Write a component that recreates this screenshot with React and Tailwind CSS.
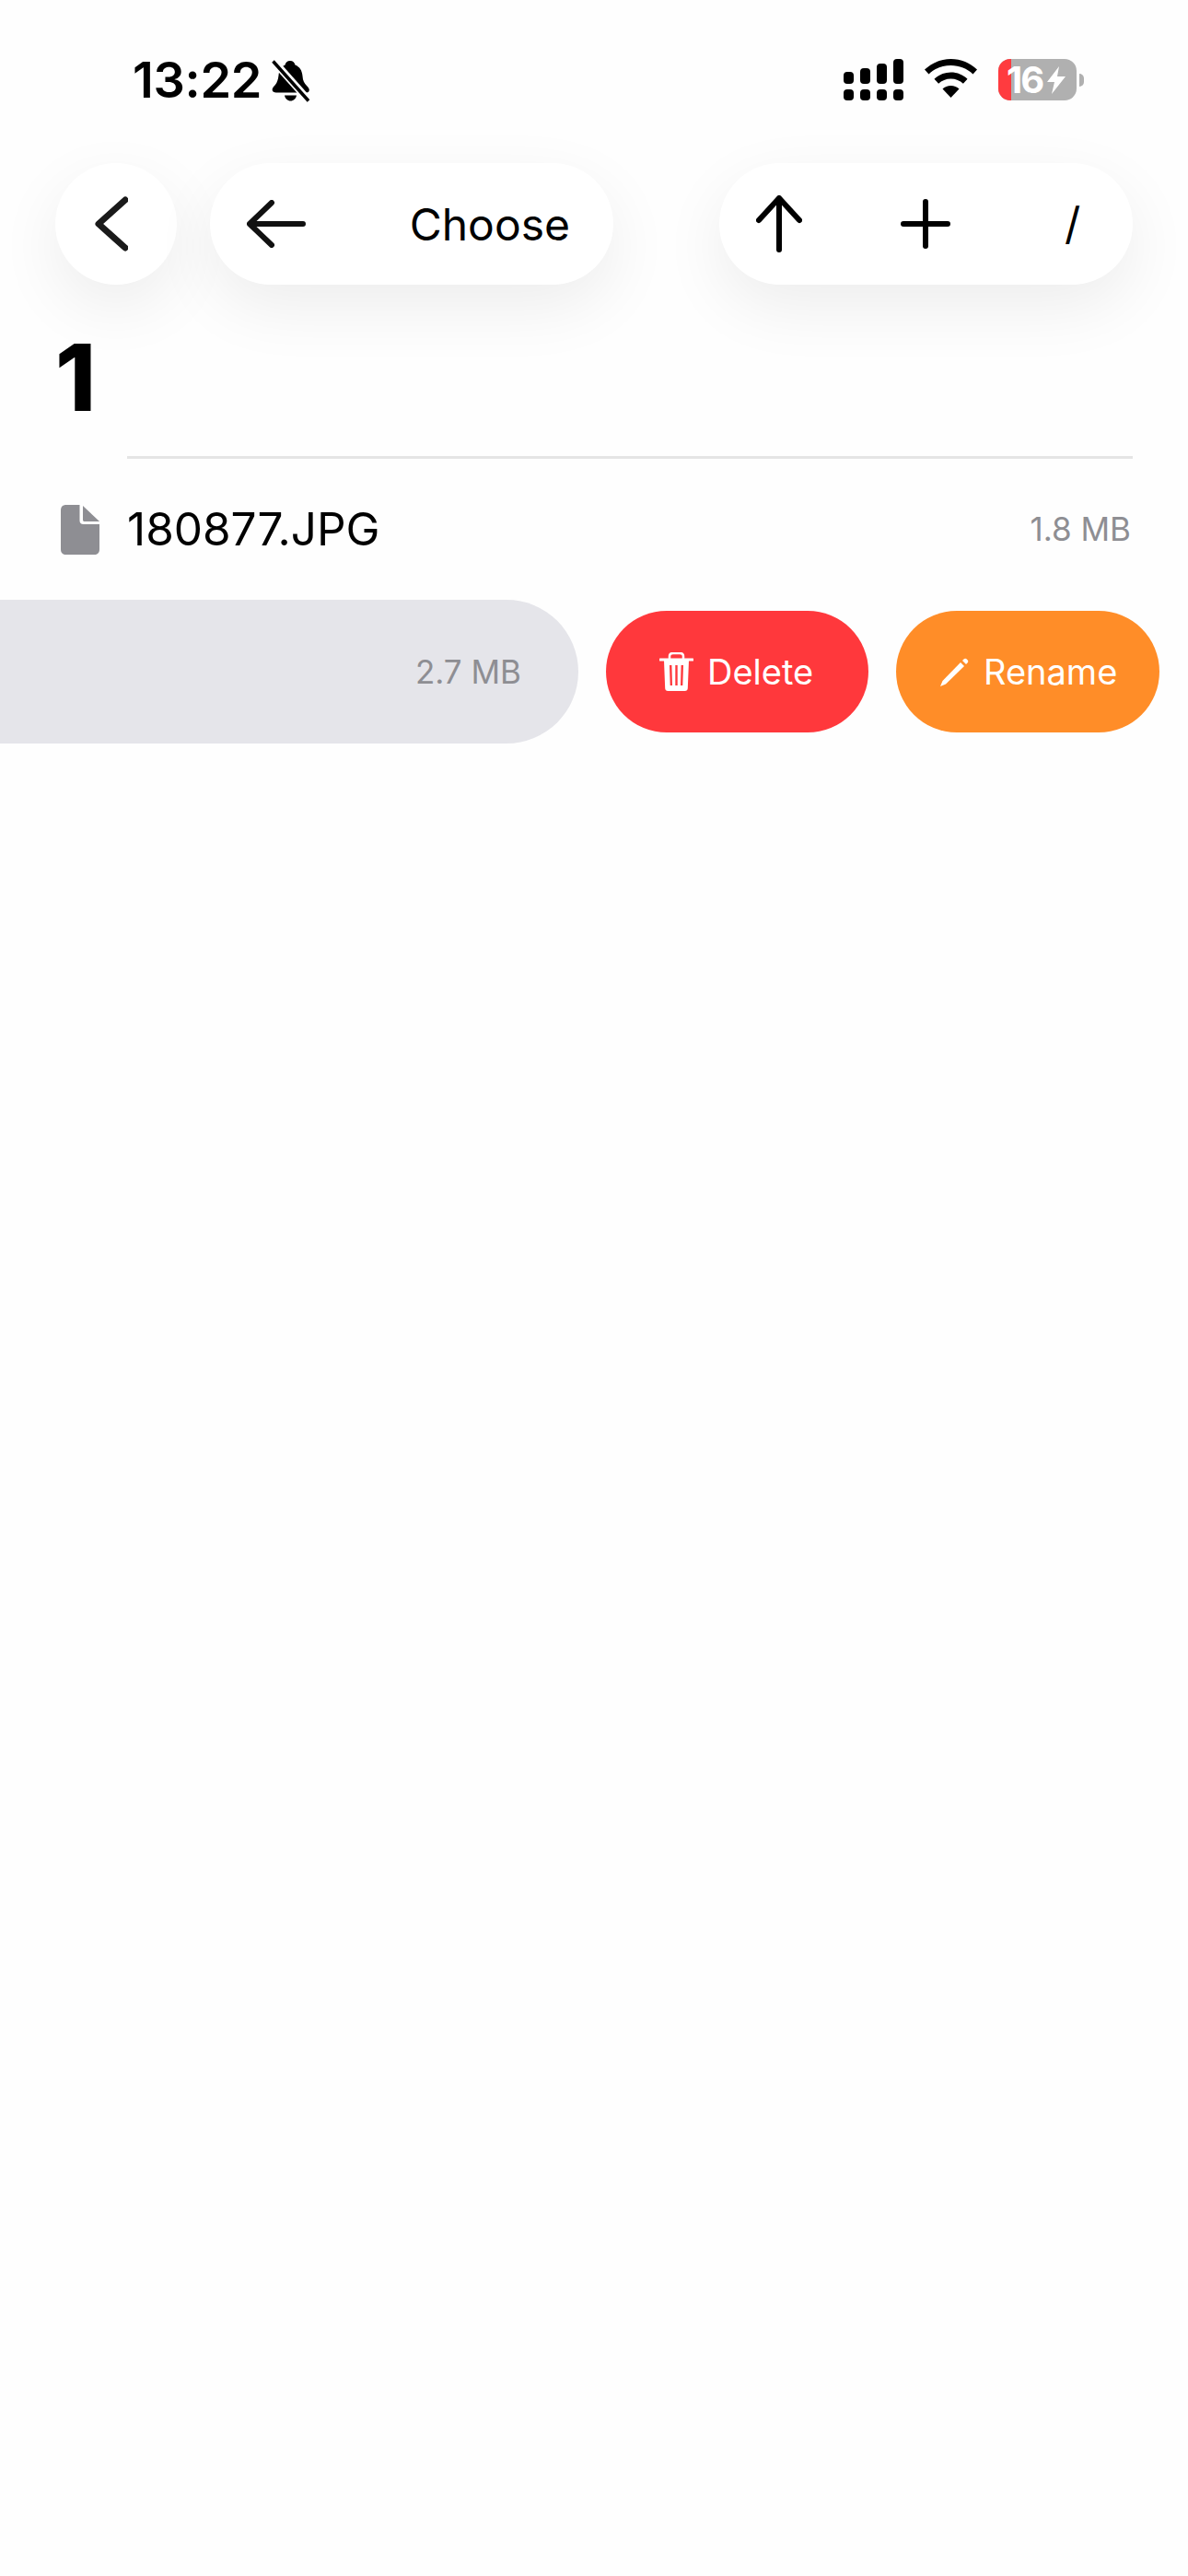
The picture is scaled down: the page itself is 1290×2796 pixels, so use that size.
import React from 'react';

const font = { fontFamily: 'Inter, sans-serif' };

function BellOff() {
  return (
    <svg width="42" height="46" viewBox="0 0 42 46">
      <path d="M20 1c3 0 5 2 5.500 4.500 5 2 7.500 6 8 12 .3 5 2 8 4.500 10.500 2 2 3.500 4 2.500 6-.5 1-2 1.500-4 1.500H5c-2.500 0-4-1-4.300-2.500C.3 31 2 29 4 27c2-2.500 3-6 3.500-10 .5-6 3.500-10 7-11.500C15 3 17 1 20 1z" fill="#000" />
      <path d="M14 38.500h13c-.6 3.600-3.300 6-6.500 6s-5.900-2.400-6.500-6z" fill="#000" />
      <path d="M1 0l41 46" stroke="#fefefe" strokeWidth="8" />
      <path d="M1.500 1.500l38.500 43" stroke="#000" strokeWidth="3.500" />
    </svg>
  );
}

function SignalBars() {
  const tops = ['h-[13px]', 'h-[17px]', 'h-[22px]', 'h-[27px]'];
  return (
    <div className="flex gap-[7px] items-end">
      {tops.map((t) => (
        <div key={t} className="flex flex-col gap-[6px] w-[11px]">
          <div className={`${t} rounded-[4px] bg-black`} />
          <div className="h-[12px] rounded-[4px] bg-black" />
        </div>
      ))}
    </div>
  );
}

function Wifi() {
  return (
    <svg width="57" height="42" viewBox="0 0 57 42">
      <path d="M28.500 0C39.500 0 49.500 4.300 57 11.500l-4.500 5C46.200 10.400 37.800 7 28.500 7S10.800 10.400 4.500 16.500L0 11.500C7.500 4.300 17.500 0 28.500 0z" fill="#000" />
      <path d="M28.500 14.500c7 0 13.300 2.700 18 7.200l-4.600 5c-3.500-3.300-8.200-5.300-13.400-5.300s-9.900 2-13.400 5.300l-4.600-5c4.700-4.500 11-7.200 18-7.200z" fill="#000" />
      <path d="M28.500 29c3.500 0 6.700 1.300 9 3.500L28.500 42l-9-9.500c2.300-2.200 5.500-3.500 9-3.500z" fill="#000" />
    </svg>
  );
}

function Battery() {
  return (
    <div className="flex items-center gap-[3px]">
      <div className="relative w-[85px] h-[45px] rounded-[13px] bg-[#b0b0b0]">
        <div className="h-full w-[14px] rounded-l-[13px] bg-[#ff3b3f]" />
        <div className="absolute inset-0 flex items-center pl-[9px] text-white font-bold text-[40px] leading-none tracking-[-2px]">
          <span>16</span>
          <svg width="20" height="30" viewBox="0 0 20 30" className="ml-[5px]">
            <path d="M13 0L0 17h8l-3 13L20 11h-9z" fill="#fff" />
          </svg>
        </div>
      </div>
      <div className="w-[5px] h-[14px] rounded-r-full bg-[#b0b0b0]" />
    </div>
  );
}

function Trash() {
  return (
    <svg width="37" height="42" viewBox="0 0 37 42">
      <path d="M11 7V4.500C11 2 12.500 1 15 1h7c2.500 0 4 1 4 3.500V7" fill="none" stroke="#fff" strokeWidth="2.500" />
      <path d="M1 8h35" stroke="#fff" strokeWidth="3" strokeLinecap="round" />
      <path fillRule="evenodd" d="M5 9h27l-1.200 30c0 2-1.300 3-3 3H9.200c-1.700 0-3-1-3-3zM11 14l.7 22h2.300l-.6-22zM17.300 14v22h2.400V14zM23.600 14l-.6 22h2.300l.7-22z" fill="#fff" />
    </svg>
  );
}

function Pencil() {
  return (
    <svg width="31" height="31" viewBox="0 0 31 31">
      <path d="M22 5l4 4L6 28.500 0 31l2.500-6z" fill="#fff" />
      <path d="M24 3l1.500-1.500c1-1 2.300-1 3.300 0l.7.7c1 1 1 2.300 0 3.300L28 7z" fill="#fff" />
    </svg>
  );
}

function FileIcon() {
  return (
    <svg width="42" height="54" viewBox="0 0 42 54">
      <path d="M6 0h14.500v17c0 2.500 1.500 4 4 4H42v27c0 4-2 6-6 6H6c-4 0-6-2-6-6V6c0-4 2-6 6-6z" fill="#8e8e93" />
      <path d="M24 1l18 17H26c-1.500 0-2-.5-2-2z" fill="#8e8e93" />
    </svg>
  );
}

const pillShadow = 'shadow-[0_24px_70px_rgba(0,0,0,0.07)]';

export default function App() {
  return (
    <div className="min-h-[2796px] bg-[#fefefe] text-black" style={font}>
      {/* status bar */}
      <div className="h-[177px] flex justify-between pt-[62px] pl-[144px] pr-[113px]">
        <div className="flex items-start gap-[11px] h-[50px]">
          <span className="text-[54px] leading-[50px] font-semibold tracking-[-0.3px]">13:22</span>
          <div className="mt-[3px]"><BellOff /></div>
        </div>
        <div className="flex items-start gap-[23px] pt-[2px]">
          <SignalBars />
          <Wifi />
          <Battery />
        </div>
      </div>

      {/* toolbar */}
      <div className="flex justify-between px-[60px]">
        <div className="flex gap-[36px]">
          <button className={`w-[132px] h-[132px] rounded-full bg-white flex items-center pl-[43px] ${pillShadow}`}>
            <svg width="36" height="60" viewBox="0 0 36 60">
              <path d="M33 4L4 30l29 26" fill="none" stroke="#1a1a1a" strokeWidth="7" strokeLinecap="round" strokeLinejoin="round" />
            </svg>
          </button>
          <button className={`w-[438px] h-[132px] rounded-full bg-white flex items-center justify-between pl-[40px] pr-[47px] ${pillShadow}`}>
            <svg width="64" height="52" viewBox="0 0 64 52">
              <path d="M27 3L3 26l24 23M3 26h58" fill="none" stroke="#111" strokeWidth="6" strokeLinecap="round" strokeLinejoin="round" />
            </svg>
            <span className="text-[48px] leading-none pt-[2px]">Choose</span>
          </button>
        </div>
        <div className={`w-[449px] h-[132px] rounded-full bg-white flex items-center pl-[40px] ${pillShadow}`}>
          <svg width="50" height="62" viewBox="0 0 50 62">
            <path d="M25 3L3 27M25 3l22 24M25 3v56" fill="none" stroke="#000" strokeWidth="6" strokeLinecap="round" strokeLinejoin="round" />
          </svg>
          <svg width="54" height="54" viewBox="0 0 54 54" className="ml-[107px]">
            <path d="M27 3v48M3 27h48" fill="none" stroke="#000" strokeWidth="6" strokeLinecap="round" />
          </svg>
          <span className="text-[48px] leading-none ml-[124px]">/</span>
        </div>
      </div>

      {/* folder title */}
      <div className="h-[186px] pl-[60px] pt-[52px]">
        <div className="text-[100px] leading-[98px] font-extrabold">1</div>
      </div>

      {/* file list */}
      <div className="h-[3px] ml-[138px] mr-[60px] bg-[#e5e5e5]" />
      <div className="h-[153px] pl-[66px] pr-[62px] flex items-center">
        <div className="w-[72px]"><FileIcon /></div>
        <div className="flex-1 flex items-center justify-between">
          <span className="text-[49.500px]">180877.JPG</span>
          <span className="text-[35px] text-[#8e8e93]">1.8 MB</span>
        </div>
      </div>
      <div className="flex items-center h-[156px]">
        <div className="w-[628px] h-full rounded-r-[78px] bg-[#e5e5ea] flex items-center justify-end pr-[62px]">
          <span className="text-[35px] text-[#8e8e93]">2.7 MB</span>
        </div>
        <button className="ml-[30px] w-[285px] h-[132px] rounded-[66px] bg-[#ff383c] text-white flex items-center pl-[58px] gap-[15px]">
          <Trash />
          <span className="text-[38px] leading-none">Delete</span>
        </button>
        <button className="ml-[30px] w-[286px] h-[132px] rounded-[66px] bg-[#ff8d28] text-white flex items-center pl-[48px] gap-[16px]">
          <Pencil />
          <span className="text-[38px] leading-none">Rename</span>
        </button>
      </div>
    </div>
  );
}
